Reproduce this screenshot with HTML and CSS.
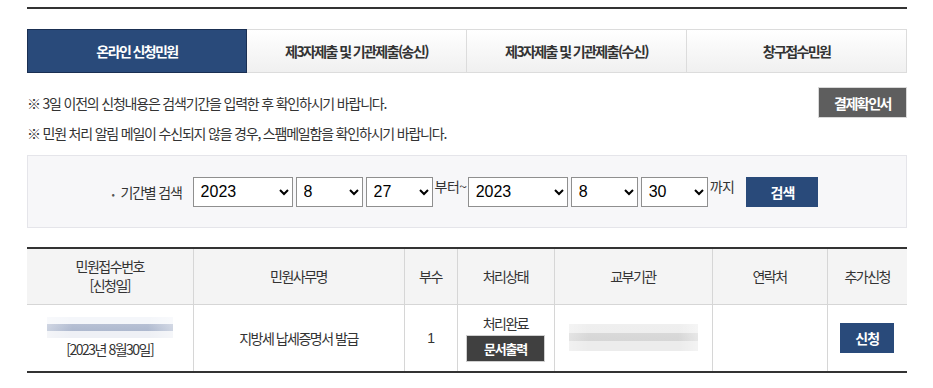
FILE: index.html
```html
<!DOCTYPE html>
<html lang="ko">
<head>
<meta charset="utf-8">
<title>온라인 신청민원</title>
<link rel="stylesheet" href="styles.css">
</head>
<body>
<div class="wrap">
  <div class="topline"></div>
  <ul class="tabs">
    <li class="tab active">온라인 신청민원</li>
    <li class="tab">제3자제출 및 기관제출(송신)</li>
    <li class="tab">제3자제출 및 기관제출(수신)</li>
    <li class="tab">창구접수민원</li>
  </ul>
  <div class="notice-row">
    <p class="notice">※ 3일 이전의 신청내용은 검색기간을 입력한 후 확인하시기 바랍니다.</p>
    <button class="btn-gray">결제확인서</button>
  </div>
  <p class="notice notice2">※ 민원 처리 알림 메일이 수신되지 않을 경우, 스팸메일함을 확인하시기 바랍니다.</p>
  <div class="search">
    <span class="label"><span class="dot">•</span> 기간별 검색</span>
    <select class="sel sel-y"><option>2023</option></select>
    <select class="sel sel-s"><option>8</option></select>
    <select class="sel sel-s"><option>27</option></select>
    <span class="word">부터~</span>
    <select class="sel sel-y"><option>2023</option></select>
    <select class="sel sel-s"><option>8</option></select>
    <select class="sel sel-s"><option>30</option></select>
    <span class="word word-end">까지</span>
    <button class="btn-navy btn-search">검색</button>
  </div>
  <table class="list">
    <colgroup>
      <col class="c1"><col class="c2"><col class="c3"><col class="c4"><col class="c5"><col class="c6"><col class="c7">
    </colgroup>
    <thead>
      <tr>
        <th>민원접수번호<br>[신청일]</th>
        <th>민원사무명</th>
        <th>부수</th>
        <th>처리상태</th>
        <th>교부기관</th>
        <th>연락처</th>
        <th>추가신청</th>
      </tr>
    </thead>
    <tbody>
      <tr>
        <td><div class="blur blur-a"></div><div class="date">[2023년 8월30일]</div></td>
        <td>지방세 납세증명서 발급</td>
        <td class="num">1</td>
        <td><div class="status">처리완료</div><button class="btn-dark">문서출력</button></td>
        <td><div class="blur blur-b"></div></td>
        <td></td>
        <td><button class="btn-navy btn-apply">신청</button></td>
      </tr>
    </tbody>
  </table>
</div>
</body>
</html>
```
FILE: styles.css
```css
* { box-sizing: border-box; }
body {
  margin: 0;
  background: #fff;
  font-family: "Noto Sans CJK KR", "Noto Sans", sans-serif;
  color: #333;
}
.wrap {
  width: 880px;
  margin-left: 27px;
  padding-top: 7px;
}
.topline {
  height: 2px;
  background: #333;
}
.tabs {
  list-style: none;
  margin: 20px 0 0;
  padding: 0;
  display: grid;
  grid-template-columns: repeat(4, 1fr);
  height: 44px;
}
.tab {
  display: flex;
  align-items: center;
  justify-content: center;
  font-size: 14px;
  font-weight: bold;
  letter-spacing: -1.6px;
  color: #333;
  border: 1px solid #dcdcdc;
  border-left: none;
  background: linear-gradient(#ffffff, #f0f0f0);
}
.tab.active {
  background: #294a7a;
  border: 1px solid #1a2f52;
  color: #fff;
}
.notice-row {
  margin-top: 14px;
  display: flex;
  justify-content: space-between;
  align-items: center;
}
.notice {
  margin: 0;
  font-size: 14px;
  letter-spacing: -1.2px;
  line-height: 20px;
  color: #333;
}
.notice2 { margin-top: 5px; }
.btn-gray {
  width: 89px;
  height: 31px;
  border: 1px solid #d8d8d8;
  background: #5e5e5e;
  color: #fff;
  font-family: inherit;
  font-size: 14px;
  font-weight: bold;
  letter-spacing: -1.5px;
  padding: 0;
}
.search {
  margin-top: 12px;
  height: 73px;
  background: #f7f7f9;
  border: 1px solid #e5e5ea;
  display: flex;
  align-items: center;
  justify-content: center;
  padding-right: 4px;
}
.label {
  font-size: 14px;
  letter-spacing: -1.2px;
  color: #333;
  margin-right: 11px;
}
.dot { font-size: 10px; margin-right: 4px; color: #555; }
.sel {
  height: 30px;
  border: 1px solid #8f8f8f;
  border-radius: 0;
  background: #fff;
  font-family: "Liberation Sans", Arial, sans-serif;
  font-size: 16px;
  color: #000;
  padding: 0 3px;
  margin-right: 3px;
}
.sel-y { width: 100px; }
.sel-s { width: 67px; }
.word {
  font-size: 14px;
  letter-spacing: -0.5px;
  color: #333;
  margin-right: 1px;
  margin-left: -1px;
  align-self: flex-start;
  margin-top: 20px;
}
.word-end { margin-right: 12px; }
.btn-navy {
  background: #294a7a;
  color: #fff;
  border: none;
  font-family: inherit;
  font-weight: bold;
  font-size: 14px;
  letter-spacing: -1px;
  padding: 0;
}
.btn-search { width: 72px; height: 30px; }
.list {
  margin-top: 19px;
  width: 880px;
  border-collapse: collapse;
  table-layout: fixed;
  border-top: 2px solid #333;
  border-bottom: 2px solid #333;
}
.c1 { width: 166px; }
.c2 { width: 211px; }
.c3 { width: 53px; }
.c4 { width: 97px; }
.c5 { width: 158px; }
.c6 { width: 115px; }
.c7 { width: 80px; }
.list th, .list td {
  border-left: 1px solid #d6d6d6;
  text-align: center;
  font-size: 14px;
  letter-spacing: -1.5px;
  color: #333;
  padding: 0;
}
.list th:first-child, .list td:first-child { border-left: none; }
.list th {
  background: #f4f4f4;
  font-weight: normal;
  height: 56px;
  line-height: 19px;
  border-bottom: 1px solid #d6d6d6;
}
.list td { height: 68px; }
.num { font-family: "Liberation Sans", Arial, sans-serif; letter-spacing: 0; }
.date { line-height: 20px; margin-top: 1px; }
.status { line-height: 20px; }
.btn-dark {
  margin-top: 2px;
  width: 79px;
  height: 27px;
  background: #404040;
  border: 1px solid #cfcfcf;
  color: #fff;
  font-family: inherit;
  font-weight: bold;
  font-size: 13px;
  letter-spacing: -1.2px;
  padding: 0;
}
.btn-apply { width: 54px; height: 30px; }
.blur { margin: 0 auto; }
.blur-a {
  width: 126px;
  height: 21px;
  background:
    linear-gradient(90deg, rgba(255,255,255,0.35) 0, rgba(255,255,255,0) 20%, rgba(255,255,255,0) 80%, rgba(255,255,255,0.4) 100%),
    linear-gradient(#f4f6fa 0, #f4f6fa 33%, #b7c0d4 33%, #aeb9cf 66%, #eef0f5 66%, #eef0f5 100%);
}
.blur-b {
  width: 129px;
  height: 27px;
  background:
    linear-gradient(90deg, rgba(255,255,255,0.3) 0, rgba(255,255,255,0) 15%, rgba(255,255,255,0) 85%, rgba(255,255,255,0.4) 100%),
    linear-gradient(#efefef 0, #eeeeee 34%, #d9d9d9 34%, #d6d6d6 63%, #ececec 63%, #ececec 100%);
}
```
